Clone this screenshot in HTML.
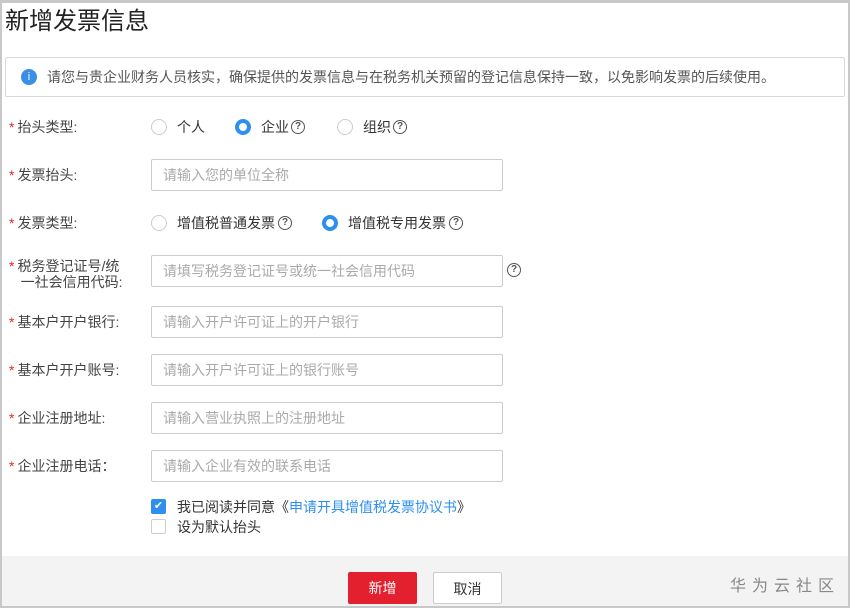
<!DOCTYPE html>
<html><head><meta charset="utf-8"><style>
*{margin:0;padding:0;box-sizing:border-box}
body{width:850px;height:608px;background:#fff;font-family:"Liberation Sans","Noto Sans CJK SC",sans-serif;position:relative;overflow:hidden;color:#333;font-size:14px}
.frame{position:absolute;left:0;top:0;width:850px;height:608px;border:2px solid #c8c8c8;border-top:3px solid #c8c8c8}
.a{position:absolute;white-space:nowrap}
.title{left:5px;top:1px;font-size:24px;color:#222}
.notice{position:absolute;left:5px;top:57px;width:840px;height:40px;border:1px solid #d8d8d8;border-radius:2px}
.lbl{position:absolute;left:9px;font-size:14px;color:#444;line-height:16px;white-space:nowrap}
.lbl b{color:#e22;font-weight:normal;margin-right:3px}
.inp{position:absolute;left:151px;width:352px;height:32px;border:1px solid #ccc;border-radius:2px;color:#aaa;font-size:14px;line-height:30px;padding-left:11px}
.r{position:absolute;width:16px;height:16px;border:1px solid #ccc;border-radius:50%}
.r.on{border:4.5px solid #2e8ff0;background:#fff}
.q{position:absolute;width:14px;height:14px;border:1.6px solid #555;border-radius:50%;font-size:10px;line-height:11px;text-align:center;font-weight:bold;color:#555}
.t{position:absolute;font-size:14px;color:#333;line-height:16px;white-space:nowrap}
.foot{position:absolute;left:2px;top:556px;width:846px;height:50px;background:#f3f3f3}
.btn{position:absolute;top:572px;height:32px;width:69px;text-align:center;line-height:32px;font-size:14px;border-radius:2px}
</style></head><body>
<div class="a title">新增发票信息</div>
<div class="notice"></div>
<div class="a" style="left:21px;top:69px;width:16px;height:16px;border-radius:50%;background:#3a8ee6;color:#fff;font-size:11px;text-align:center;line-height:16px">i</div>
<div class="a t" style="left:47px;top:69px;font-size:14px;color:#555">请您与贵企业财务人员核实，确保提供的发票信息与在税务机关预留的登记信息保持一致，以免影响发票的后续使用。</div>

<div class="lbl" style="top:119px"><b>*</b>抬头类型:</div>
<div class="r" style="left:151px;top:119px"></div><div class="t" style="left:177px;top:119px">个人</div>
<div class="r on" style="left:235px;top:119px"></div><div class="t" style="left:261px;top:119px">企业</div><div class="q" style="left:291px;top:120px">?</div>
<div class="r" style="left:337px;top:119px"></div><div class="t" style="left:363px;top:119px">组织</div><div class="q" style="left:393px;top:120px">?</div>

<div class="lbl" style="top:167px"><b>*</b>发票抬头:</div>
<div class="inp" style="top:159px">请输入您的单位全称</div>

<div class="lbl" style="top:215px"><b>*</b>发票类型:</div>
<div class="r" style="left:151px;top:215px"></div><div class="t" style="left:177px;top:215px">增值税普通发票</div><div class="q" style="left:278px;top:216px">?</div>
<div class="r on" style="left:322px;top:215px"></div><div class="t" style="left:348px;top:215px">增值税专用发票</div><div class="q" style="left:449px;top:216px">?</div>

<div class="lbl" style="top:258px;line-height:16px"><b>*</b>税务登记证号/统<br>&nbsp;&nbsp;&nbsp;一社会信用代码:</div>
<div class="inp" style="top:255px">请填写税务登记证号或统一社会信用代码</div>
<div class="q" style="left:507px;top:263px">?</div>

<div class="lbl" style="top:314px"><b>*</b>基本户开户银行:</div>
<div class="inp" style="top:306px">请输入开户许可证上的开户银行</div>
<div class="lbl" style="top:362px"><b>*</b>基本户开户账号:</div>
<div class="inp" style="top:354px">请输入开户许可证上的银行账号</div>
<div class="lbl" style="top:410px"><b>*</b>企业注册地址:</div>
<div class="inp" style="top:402px">请输入营业执照上的注册地址</div>
<div class="lbl" style="top:458px"><b>*</b>企业注册电话：</div>
<div class="inp" style="top:450px">请输入企业有效的联系电话</div>

<div class="a" style="left:151px;top:499px;width:15px;height:15px;background:#2e8ff0;border-radius:2px;color:#fff;font-size:11px;text-align:center;line-height:15px">✔</div>
<div class="t" style="left:177px;top:499px">我已阅读并同意《<span style="color:#2e8ff0">申请开具增值税发票协议书</span>》</div>
<div class="a" style="left:151px;top:519px;width:15px;height:15px;border:1px solid #ccc;border-radius:2px"></div>
<div class="t" style="left:177px;top:519px">设为默认抬头</div>

<div class="foot"></div>
<div class="btn" style="left:348px;background:#e3202e;color:#fff">新增</div>
<div class="btn" style="left:433px;background:#fff;border:1px solid #ccc;color:#333">取消</div>
<div class="a" style="left:730px;top:572px;font-size:16px;color:#888;letter-spacing:6px">华为云社区</div>
<div class="frame"></div>
</body></html>
